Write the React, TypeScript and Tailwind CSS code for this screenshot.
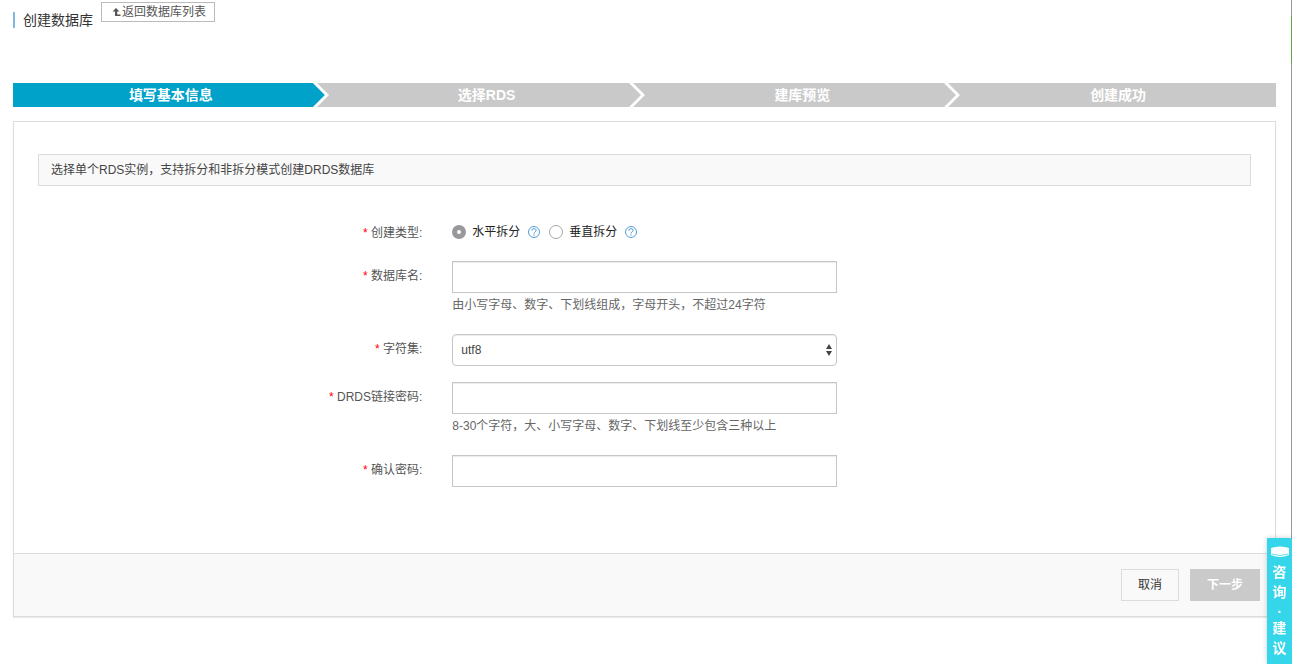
import type { ReactNode } from 'react';

const steps = ['填写基本信息', '选择RDS', '建库预览', '创建成功'];

const inputClass =
    'block h-8 w-full border border-[#c6c6c6] bg-white px-2 text-xs text-[#333] shadow-[inset_0_1px_1px_rgba(0,0,0,0.08)] outline-none focus:border-[#00a2ca]';

const radioClass =
    'size-3.5 appearance-none rounded-full border border-[#a8a8a8] bg-white checked:border-[5px] checked:border-[#98979c]';

function HelpIcon() {
    return (
        <svg className="size-3 shrink-0" viewBox="0 0 12 12" fill="none" stroke="#3f94cf">
            <circle cx="6" cy="6" r="5.5" strokeWidth="0.9" />
            <path d="M3.9 4.6C3.9 3.3 4.8 2.6 6 2.6s2.1.7 2.1 1.8C8.1 5.8 6 5.9 6 7.5" strokeWidth="1" />
            <path d="M6 8.4v1.2" strokeWidth="1.2" />
        </svg>
    );
}

interface RowProps {
    label: string;
    id: string;
    hint?: string;
    children: ReactNode;
}

function Row({ label, id, hint, children }: RowProps) {
    return (
        <div className="flex">
            <label htmlFor={id} className="w-1/3 shrink-0 pt-1 pr-5 text-right leading-[22px] text-[#555]">
                <span className="text-[#f00]">*</span> {label}:
            </label>
            <div className="ml-2.5 w-[385px]">
                {children}
                {hint && <p className="pt-0.5 leading-5 text-[#666]">{hint}</p>}
            </div>
        </div>
    );
}

function Steps() {
    return (
        <ol className="flex h-6 bg-[#c9c9c9] text-sm font-bold text-white">
            {steps.map((step, i) => (
                <li
                    key={step}
                    aria-current={i === 0 ? 'step' : undefined}
                    className={`relative flex-1 text-center leading-6 ${i === 0 ? 'bg-[#00a2ca]' : 'bg-[#c9c9c9]'}`}
                >
                    {step}
                    {/* Arrow between two steps */}
                    {i < steps.length - 1 && (
                        <svg className="absolute top-0 right-0 z-10 h-6 w-4" viewBox="0 0 16 24">
                            <path d="M0 0H16V24H0L12 12Z" fill="#c9c9c9" />
                            <path d="M0 0H4L16 12L4 24H0L12 12Z" fill="#fff" />
                        </svg>
                    )}
                </li>
            ))}
        </ol>
    );
}

export default function App() {
    return (
        <div className="min-h-screen border-r border-[#999] bg-white pr-[15px] pl-[13px] font-['Liberation_Sans','Noto_Sans_CJK_SC',sans-serif] text-xs text-[#333]">
            <header className="flex h-[83px] items-start gap-2">
                <h1 className="mt-3 flex items-center gap-2 text-sm leading-4 text-[#333]">
                    <span className="h-4 w-0.5 bg-[#7fb7df]" />
                    创建数据库
                </h1>
                <button type="button" className="mt-0.5 flex h-5 items-center border border-[#bbb] bg-white pr-2 pl-2.5 text-xs text-[#555]">
                    <svg className="h-3 w-2.5" viewBox="0 0 10 12" fill="#555">
                        <path d="M4 2 7.5 5.5H5.2V8.5H8.5V10H3V5.5H.5Z" />
                    </svg>
                    返回数据库列表
                </button>
            </header>

            <Steps />

            <form className="mt-3.5 border border-[#dcdcdc] shadow-[0_1px_1px_rgba(0,0,0,0.08)]" onSubmit={(e) => e.preventDefault()}>
                <div className="px-6 pt-8 pb-[66px]">
                    <p className="border border-[#dcdcdc] bg-[#f9f9f9] px-3 leading-[30px] text-[#444]">
                        选择单个RDS实例，支持拆分和非拆分模式创建DRDS数据库
                    </p>

                    <div className="mt-8">
                        <Row label="创建类型" id="mode-h">
                            <div className="flex h-[27px] items-center">
                                <input id="mode-h" type="radio" name="mode" defaultChecked className={radioClass} />
                                <label htmlFor="mode-h" className="mr-2 ml-1.5 text-[#222]">水平拆分</label>
                                <HelpIcon />
                                <input id="mode-v" type="radio" name="mode" className={`ml-[9px] ${radioClass}`} />
                                <label htmlFor="mode-v" className="mr-2 ml-1.5 text-[#222]">垂直拆分</label>
                                <HelpIcon />
                            </div>
                        </Row>
                    </div>
                    <div className="mt-4 flex flex-col gap-[19px]">
                        <Row label="数据库名" id="db-name" hint="由小写字母、数字、下划线组成，字母开头，不超过24字符">
                            <input id="db-name" type="text" className={inputClass} />
                        </Row>
                        <div className="flex flex-col gap-4">
                            <Row label="字符集" id="charset">
                                <div className="relative">
                                    <select
                                        id="charset"
                                        className="block h-8 w-full appearance-none rounded border border-[#c6c6c6] bg-white px-2 text-xs text-[#444] shadow-[inset_0_1px_1px_rgba(0,0,0,0.08)]"
                                    >
                                        <option>utf8</option>
                                        <option>gbk</option>
                                    </select>
                                    <svg className="pointer-events-none absolute top-2.5 right-1 h-3 w-2" viewBox="0 0 8 12" fill="#444">
                                        <path d="M4 0 7 5H1ZM1 7H7L4 12Z" />
                                    </svg>
                                </div>
                            </Row>
                            <Row label="DRDS链接密码" id="password" hint="8-30个字符，大、小写字母、数字、下划线至少包含三种以上">
                                <input id="password" type="password" className={inputClass} />
                            </Row>
                        </div>
                        <Row label="确认密码" id="confirm">
                            <input id="confirm" type="password" className={inputClass} />
                        </Row>
                    </div>
                </div>

                <footer className="flex justify-end gap-[11px] border-t border-[#dcdcdc] bg-[#f9f9f9] py-[15px] pr-[15px]">
                    <button type="button" className="h-8 border border-[#dcdcdc] bg-[#f9f9f9] px-4">
                        取消
                    </button>
                    <button type="submit" className="h-8 bg-[#cacaca] px-[17px] font-bold text-white">
                        下一步
                    </button>
                </footer>
            </form>

            {/* Green marker on the window's right edge */}
            <div className="absolute top-4 right-0 h-[47px] w-px bg-[#6aa544]" />

            {/* Floating feedback tab */}
            <a
                href="#feedback"
                className="fixed right-0 bottom-0 flex h-[126px] w-[25px] flex-col items-center bg-[#35d6ea] pt-2 text-sm leading-5 font-bold text-white shadow-[0_0_5px_rgba(0,0,0,0.2)]"
            >
                <svg className="mb-1 h-3 w-[18px]" viewBox="0 0 18 12" fill="#fff">
                    <path d="M0 2Q9-1 18 2V9Q9 13 0 9Z" />
                    <path d="M1 8Q9 11 17 8" fill="none" stroke="#35d6ea" strokeWidth="0.8" />
                </svg>
                <span>咨</span>
                <span>询</span>
                <span className="mb-1 leading-3">.</span>
                <span>建</span>
                <span>议</span>
            </a>
        </div>
    );
}
